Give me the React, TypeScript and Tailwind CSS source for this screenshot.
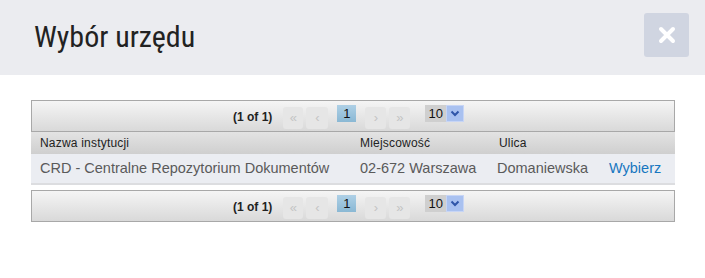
const Paginator = () => (
  <div className="flex h-[32px] items-start border border-[#a8a8a8] bg-gradient-to-b from-[#f5f5f5] to-[#d9d9d9] pl-[201px] text-[12px] text-[#333]">
    <span className="mr-[11px] mt-[7px] font-bold text-[#222]">(1 of 1)</span>
    <div className="mt-[6px] flex items-center gap-[3px]">
      <span className="flex h-[22px] w-[20px] items-center justify-center rounded-[3px] bg-[#e6e6e6] text-[13px] text-[#c4c4c4]">«</span>
      <span className="flex h-[22px] w-[22px] items-center justify-center rounded-[3px] bg-[#e6e6e6] text-[13px] text-[#c4c4c4]">‹</span>
    </div>
    <span className="ml-[9px] mt-[4px] flex h-[17px] w-[19px] items-center justify-center bg-gradient-to-b from-[#aed0e6] to-[#8ab8d4] text-[13px] text-[#111]">1</span>
    <div className="ml-[9px] mt-[6px] flex items-center gap-[3px]">
      <span className="flex h-[22px] w-[21px] items-center justify-center rounded-[3px] bg-[#e6e6e6] text-[13px] text-[#c4c4c4]">›</span>
      <span className="flex h-[22px] w-[21px] items-center justify-center rounded-[3px] bg-[#e6e6e6] text-[13px] text-[#c4c4c4]">»</span>
    </div>
    <div className="ml-[15px] mt-[4px] flex items-center">
      <span className="flex h-[17px] w-[21px] items-center justify-center bg-[#cfcfcf] text-[13px] text-[#111]">10</span>
      <span className="flex h-[17px] w-[18px] items-center justify-center border border-[#c7d5f5] bg-[#a9c1f0]">
        <svg width="10" height="7" viewBox="0 0 10 7">
          <path d="M1.5 1.5 L5 5 L8.5 1.5" fill="none" stroke="#2f55a8" strokeWidth="2" />
        </svg>
      </span>
    </div>
  </div>
);

export default function App() {
  return (
    <div className="h-[278px] w-[705px] bg-white font-['Liberation_Sans',Arial,sans-serif]">
      <div className="flex h-[75px] items-start justify-between bg-[#ebecf0] pl-[34px] pr-[16px]">
        <h1 className="mt-[19px] font-['Roboto_Condensed','Roboto',sans-serif] text-[30px] font-normal leading-[36px] text-[#222]">Wybór urzędu</h1>
        <button className="mt-[13px] flex h-[44px] w-[45px] items-center justify-center rounded-[3px] bg-[#d0d5e1]">
          <svg width="18" height="18" viewBox="0 0 18 18">
            <path d="M3 3 L15 15 M15 3 L3 15" stroke="#fff" strokeWidth="4" strokeLinecap="round" />
          </svg>
        </button>
      </div>
      <div className="mx-[31px] mt-[25px] w-[644px]">
        <Paginator />
        <div className="flex h-[22px] items-center bg-gradient-to-b from-[#e3e3e3] to-[#cfcfcf] text-[12px] tracking-[0.2px] text-[#222]">
          <span className="w-[329px] pl-[9px]">Nazwa instytucji</span>
          <span className="w-[139px]">Miejscowość</span>
          <span>Ulica</span>
        </div>
        <div className="flex h-[31px] items-center border-b-2 border-[#dcdde0] bg-[#ebedf2] text-[14.5px] text-[#5a5a5a]">
          <span className="w-[329px] pl-[9px]">CRD - Centralne Repozytorium Dokumentów</span>
          <span className="w-[137px]">02-672 Warszawa</span>
          <span className="w-[112px]">Domaniewska</span>
          <span className="text-[#1777c0]">Wybierz</span>
        </div>
        <div className="mt-[5px]">
          <Paginator />
        </div>
      </div>
    </div>
  );
}
